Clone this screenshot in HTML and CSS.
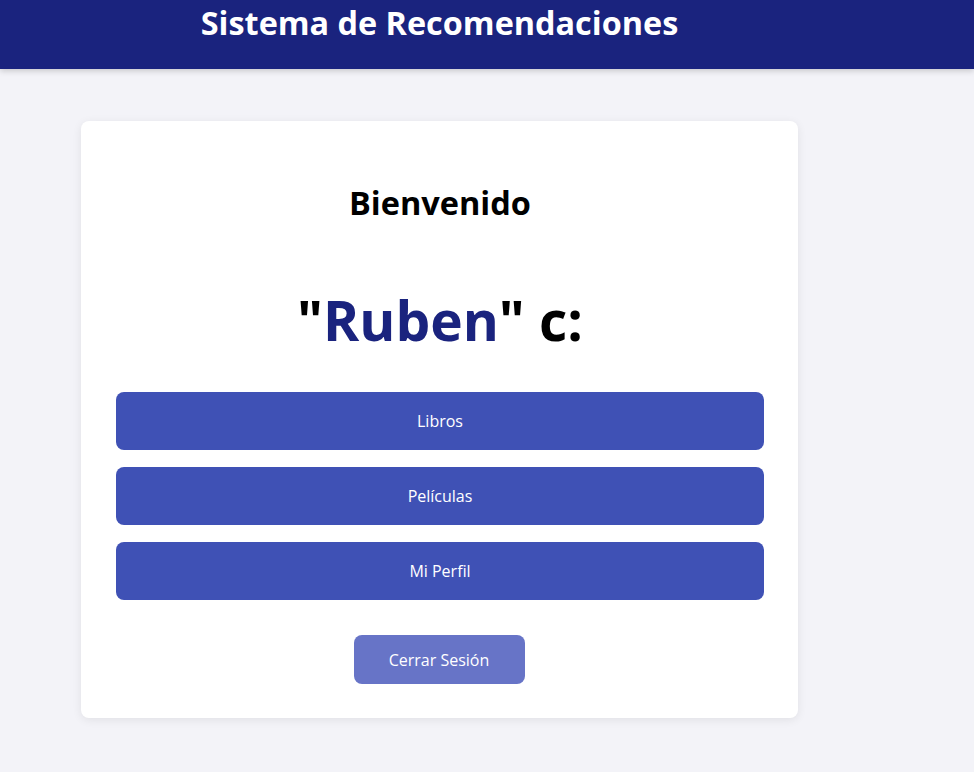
FILE: index.html
```html
<!DOCTYPE html>
<html lang="es">
<head>
<meta charset="utf-8">
<title>Sistema de Recomendaciones</title>
<link rel="stylesheet" href="styles.css">
</head>
<body>
<header class="topbar">
  <div class="topbar-inner">
    <h1 class="app-title">Sistema de Recomendaciones</h1>
  </div>
</header>
<main class="page">
  <section class="card">
    <h2 class="welcome">Bienvenido</h2>
    <h1 class="username">"<span class="name">Ruben</span>" c:</h1>
    <nav class="menu">
      <button class="menu-btn">Libros</button>
      <button class="menu-btn">Películas</button>
      <button class="menu-btn">Mi Perfil</button>
    </nav>
    <div class="logout-wrap">
      <button class="logout-btn">Cerrar Sesión</button>
    </div>
  </section>
</main>
</body>
</html>
```

FILE: styles.css
```css
html, body {
  margin: 0;
  padding: 0;
}
body {
  background: #f3f3f8;
  font-family: "Open Sans", "Noto Sans", sans-serif;
  min-height: 772px;
}
.topbar {
  background: #1a237e;
  height: 69px;
  box-shadow: 0 2px 6px rgba(0, 0, 0, 0.18);
}
.topbar-inner {
  width: 717px;
  margin-left: 81px;
  text-align: center;
}
.app-title {
  margin: 0;
  color: #ffffff;
  font-size: 32.4px;
  font-weight: 700;
  line-height: 44px;
}
.page {
  padding: 52px 0 0 81px;
}
.card {
  width: 717px;
  box-sizing: border-box;
  background: #ffffff;
  border-radius: 8px;
  box-shadow: 0 2px 10px rgba(0, 0, 0, 0.08);
  padding: 56px 34px 34px 35px;
  text-align: center;
}
.welcome {
  margin: 0;
  font-size: 32.5px;
  font-weight: 700;
  line-height: 52px;
  color: #000;
}
.username {
  margin: 51px 0 0;
  font-size: 55px;
  font-weight: 700;
  line-height: 80px;
  color: #000;
}
.name {
  color: #1a237e;
}
.menu {
  margin-top: 32px;
  display: flex;
  flex-direction: column;
  gap: 17px;
}
.menu-btn {
  height: 58px;
  border: none;
  border-radius: 8px;
  background: #3f51b5;
  color: #fff;
  font-family: inherit;
  font-size: 16px;
}
.logout-wrap {
  margin-top: 35px;
  padding-right: 2px;
}
.logout-btn {
  width: 171px;
  height: 49px;
  border: none;
  border-radius: 8px;
  background: #6774c7;
  color: #fff;
  font-family: inherit;
  font-size: 16px;
}
```
